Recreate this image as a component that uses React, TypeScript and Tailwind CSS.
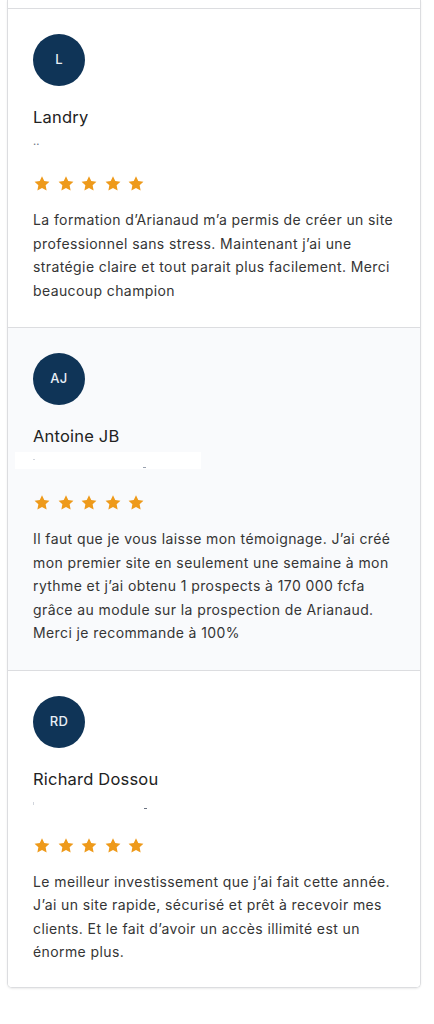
import React from 'react'

type Review = {
  initials: string
  name: string
  text: string
  shaded: boolean
  mask: 'dots' | 'white' | 'faint'
}

const reviews: Review[] = [
  {
    initials: 'L',
    name: 'Landry',
    text: "La formation d’Arianaud m’a permis de créer un site professionnel sans stress. Maintenant j’ai une stratégie claire et tout parait plus facilement. Merci beaucoup champion",
    shaded: false,
    mask: 'dots',
  },
  {
    initials: 'AJ',
    name: 'Antoine JB',
    text: "Il faut que je vous laisse mon témoignage. J’ai créé mon premier site en seulement une semaine à mon rythme et j’ai obtenu 1 prospects à 170 000 fcfa grâce au module sur la prospection de Arianaud. Merci je recommande à 100%",
    shaded: true,
    mask: 'white',
  },
  {
    initials: 'RD',
    name: 'Richard Dossou',
    text: "Le meilleur investissement que j’ai fait cette année. J’ai un site rapide, sécurisé et prêt à recevoir mes clients. Et le fait d’avoir un accès illimité est un énorme plus.",
    shaded: false,
    mask: 'faint',
  },
]

const Star = () => (
  <svg viewBox="0 0 24 24" className="w-[18px] h-[18px]" fill="#ee9a1b">
    <path d="M12 1.8l3 6.3 6.9.85-5.05 4.8 1.3 6.85L12 17.3l-6.15 3.3 1.3-6.85L2.1 8.95 9 8.1z" />
  </svg>
)

const Subline = ({ mask }: { mask: Review['mask'] }) => {
  if (mask === 'dots') {
    return <div className="mt-[4px] h-[16px] text-[11px] leading-[16px] text-gray-500">..</div>
  }
  if (mask === 'white') {
    return (
      <div className="mt-[4px] h-[17px] -mb-[1px] -ml-[18px] w-[186px] bg-white flex items-end justify-between pl-[18px] pr-[55px] pb-[1px]">
        <span className="block w-[2px] h-[1px] bg-gray-300 mb-[8px]" />
        <span className="block w-[3px] h-[1px] bg-gray-400" />
      </div>
    )
  }
  return (
    <div className="mt-[4px] h-[16px] w-[114px] flex items-end justify-between">
      <span className="block w-[1px] h-[3px] bg-gray-300 mb-[6px]" />
      <span className="block w-[3px] h-[1px] bg-gray-500 mb-[2px]" />
    </div>
  )
}

const ReviewItem = ({ review, last }: { review: Review; last: boolean }) => (
  <div
    className={`pl-[25px] pr-[16px] pt-[25px] ${last ? 'pb-[23px]' : 'pb-[25px] border-b border-[#dcdde0]'} ${
      review.shaded ? 'bg-[#f9fafc]' : 'bg-white'
    }`}
  >
    <div className="w-[52px] h-[52px] rounded-full bg-[#0f3457] flex items-center justify-center text-[13px] text-[#e8eef5] font-medium tracking-[0.3px]">
      {review.initials}
    </div>
    <div className="mt-[19px] text-[16.5px] leading-[24px] tracking-[0.2px] text-[#222]">{review.name}</div>
    <Subline mask={review.mask} />
    <div className="mt-[26px] flex gap-[5.5px]">
      {[0, 1, 2, 3, 4].map((i) => (
        <Star key={i} />
      ))}
    </div>
    <p className="mt-[15px] text-[14px] leading-[23.5px] tracking-[0.4px] text-[#353535]">{review.text}</p>
  </div>
)

export default function App() {
  return (
    <div className="min-h-screen bg-white pb-[34px]" style={{ fontFamily: 'Inter, "Liberation Sans", Arial, sans-serif' }}>
      <div className="ml-[7px] w-[414px] border-x border-b border-[#dcdde0] rounded-b-[5px] shadow-[0_1px_2px_rgba(0,0,0,0.08)] overflow-hidden">
        <div className="h-[9px] bg-white border-b border-[#dcdde0]" />
        {reviews.map((r, i) => (
          <ReviewItem key={r.name} review={r} last={i === reviews.length - 1} />
        ))}
      </div>
    </div>
  )
}
